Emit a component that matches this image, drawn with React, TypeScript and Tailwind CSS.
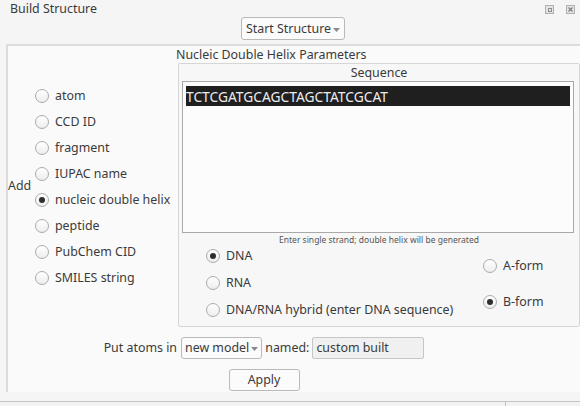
import React from "react";

interface RadioProps {
  readonly label: string;
  readonly checked?: boolean;
}

function Radio({ label, checked }: RadioProps) {
  return (
    <div className="flex h-[18px] items-center gap-[6px] whitespace-nowrap">
      <span className="flex h-[14px] w-[14px] shrink-0 items-center justify-center rounded-full border border-[#ababab] bg-[linear-gradient(#ffffff,#ededed)]">
        {checked && <span className="h-[6px] w-[6px] rounded-full bg-[#2e2e2e]" />}
      </span>
      <span className="pt-[1px]">{label}</span>
    </div>
  );
}

function Caret() {
  return (
    <svg width="7" height="4" viewBox="0 0 7 4" className="ml-[2px] mt-[1px]">
      <path d="M0 0 L7 0 L3.5 4 Z" fill="#8a8a8a" />
    </svg>
  );
}

const ADD_KINDS = [
  "atom",
  "CCD ID",
  "fragment",
  "IUPAC name",
  "nucleic double helix",
  "peptide",
  "PubChem CID",
  "SMILES string",
];

export default function App() {
  return (
    <div className="flex h-[406px] w-[580px] flex-col overflow-hidden bg-[#f5f5f5] font-['Noto_Sans',sans-serif] text-[12.4px] leading-none text-[#3a3a3a]">
      {/* title bar */}
      <div className="flex h-[17px] items-center justify-between pl-[10px] pr-[5px] pt-[2px]">
        <span>Build Structure</span>
        <div className="flex items-center gap-[12px]">
          <span className="flex h-[9px] w-[9px] items-center justify-center border border-[#b0b0b0] bg-[#e4e4e4]">
            <span className="h-[4px] w-[4px] border border-[#8c8c8c]" />
          </span>
          <svg width="9" height="9" viewBox="0 0 9 9">
            <rect x="0.5" y="0.5" width="8" height="8" fill="#e4e4e4" stroke="#b0b0b0" />
            <path d="M2.5 2.5 L6.5 6.5 M6.5 2.5 L2.5 6.5" stroke="#7a7a7a" strokeWidth="1.1" />
          </svg>
        </div>
      </div>

      {/* start structure */}
      <div className="flex h-[23px] justify-center pl-[6px]">
        <button className="flex h-[23px] items-center rounded-[3px] border border-[#b9b9b9] bg-[#fbfbfb] px-[4px] pt-[1px]">
          Start Structure
          <Caret />
        </button>
      </div>

      {/* main frame */}
      <div className="ml-[6px] mt-[4px] flex h-[348px] flex-col border-l-2 border-t-2 border-[#dcdcdc] bg-[#fafafa]">
        <div className="flex h-[281px]">
          <div className="flex w-[168px] items-center">
            <span className="w-[27px]">Add</span>
            <div className="flex flex-col gap-[8px]">
              {ADD_KINDS.map((k) => (
                <Radio key={k} label={k} checked={k === "nucleic double helix"} />
              ))}
            </div>
          </div>

          <div className="flex flex-1 flex-col">
            <div className="flex h-[17px] items-center pt-[1px]">Nucleic Double Helix Parameters</div>
            <div className="ml-[2px] flex h-[264px] flex-col rounded-[2px] border border-[#d6d6d6] bg-[#f7f7f7]">
              <div className="flex h-[17px] items-center justify-center pt-[1px]">Sequence</div>
              <div className="ml-[3px] mr-[5px] h-[152px] border border-[#a9a9a9] bg-[#fcfcfc] px-[3px] pt-[4px]">
                <div className="flex h-[20px] items-center bg-[#1f1f1f] pt-[1px] text-[13.8px] text-[#ececec]">
                  TCTCGATGCAGCTAGCTATCGCAT
                </div>
              </div>
              <div className="flex h-[14px] items-center justify-center text-[8.5px] text-[#555]">
                Enter single strand; double helix will be generated
              </div>
              <div className="flex flex-1 items-start pl-[27px]">
                <div className="flex flex-1 flex-col gap-[9px]">
                  <Radio label="DNA" checked />
                  <Radio label="RNA" />
                  <Radio label="DNA/RNA hybrid (enter DNA sequence)" />
                </div>
                <div className="mt-[10px] flex w-[96px] flex-col gap-[18px]">
                  <Radio label="A-form" />
                  <Radio label="B-form" checked />
                </div>
              </div>
            </div>
          </div>
        </div>

        <div className="mt-[10px] flex h-[22px] items-center justify-center pr-[60px]">
          <span className="mr-[4px] pt-[1px]">Put atoms in</span>
          <button className="flex h-[22px] items-center rounded-[3px] border border-[#b9b9b9] bg-[#fbfbfb] px-[3px] pt-[1px]">
            new model
            <Caret />
          </button>
          <span className="ml-[3px] mr-[3px] pt-[1px]">named:</span>
          <div className="flex h-[22px] w-[112px] items-center rounded-[2px] border border-[#c6c6c6] bg-[#f0f0f0] px-[3px] pt-[1px]">
            custom built
          </div>
        </div>

        <div className="mt-[10px] flex justify-center pr-[60px]">
          <button className="flex h-[22px] w-[71px] items-center justify-center rounded-[3px] border border-[#b9b9b9] bg-[#fbfbfb] pt-[1px]">
            Apply
          </button>
        </div>
      </div>

      {/* lower panel edge */}
      <div className="mt-[9px] flex flex-1 border-t border-[#c4c4c4] bg-[#f2f2f2]">
        <div className="flex-1" />
        <div className="w-[75px] border-l border-[#c4c4c4]" />
      </div>
    </div>
  );
}
